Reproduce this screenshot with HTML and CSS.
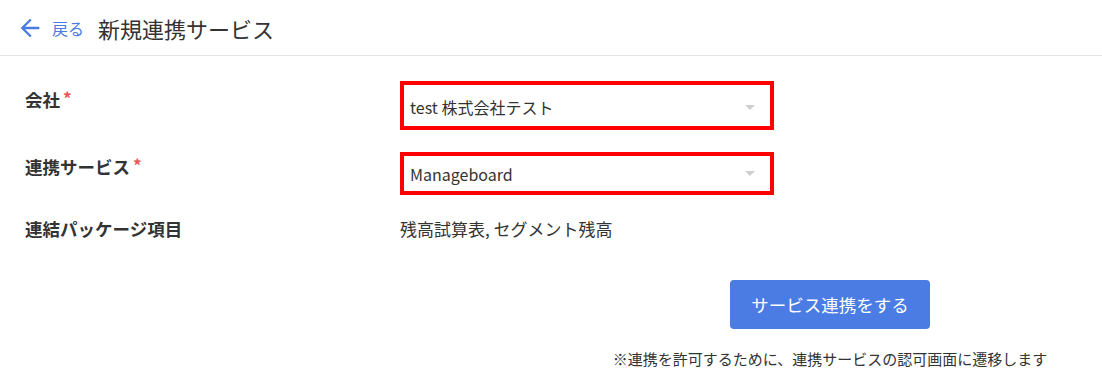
FILE: index.html
```html
<!DOCTYPE html>
<html lang="ja">
<head>
    <meta charset="UTF-8">
    <meta name="viewport" content="width=device-width, initial-scale=1.0">
    <title>新規連携サービス</title>
    <link rel="stylesheet" href="styles.css">
</head>
<body>
    <div class="page-header">
        <a class="back-link" href="#">
            <svg class="back-icon" viewBox="0 0 24 24" width="28" height="28">
                <path d="M20 11H7.83l5.59-5.59L12 4l-8 8 8 8 1.41-1.41L7.83 13H20v-2z" fill="currentColor"/>
            </svg>
            <span>戻る</span>
        </a>
        <h1 class="page-title">新規連携サービス</h1>
    </div>

    <div class="form">
        <div class="form-row row-company">
            <div class="form-label">会社<span class="required">*</span></div>
            <div class="select select-tall">
                <span class="select-value">test 株式会社テスト</span>
                <span class="select-caret"></span>
            </div>
        </div>
        <div class="form-row row-service">
            <div class="form-label">連携サービス<span class="required">*</span></div>
            <div class="select">
                <span class="select-value">Manageboard</span>
                <span class="select-caret"></span>
            </div>
        </div>
        <div class="form-row row-package">
            <div class="form-label">連結パッケージ項目</div>
            <div class="form-value">残高試算表, セグメント残高</div>
        </div>

        <div class="form-actions">
            <button class="primary-button" type="button">サービス連携をする</button>
            <p class="form-note">※連携を許可するために、連携サービスの認可画面に遷移します</p>
        </div>
    </div>
</body>
</html>
```

FILE: styles.css
```css
body {
    font-family: "Noto Sans CJK JP", "Noto Sans", sans-serif;
    margin: 0;
    padding: 0;
    background-color: #fff;
    color: #333;
}

.page-header {
    display: flex;
    align-items: center;
    height: 55px;
    padding-left: 16px;
    border-bottom: 1px solid #e3e3e3;
}

.back-link {
    display: flex;
    align-items: center;
    gap: 8px;
    color: #4a7be0;
    text-decoration: none;
    font-size: 16px;
}

.back-icon {
    display: block;
}

.page-title {
    margin: 0 0 0 14px;
    font-size: 22px;
    font-weight: normal;
    color: #333;
    line-height: 30px;
}

.form {
    padding: 25px 0 0 25px;
}

.form-row {
    display: flex;
    align-items: flex-start;
}

.form-label {
    width: 375px;
    font-size: 17.5px;
    font-weight: bold;
    line-height: 24px;
}

.required {
    color: #e85757;
    font-size: 17px;
    font-weight: bold;
    margin-left: 3px;
    vertical-align: top;
    position: relative;
    top: -2px;
}

.row-company .form-label {
    padding-top: 7px;
}

.row-service {
    margin-top: 22px;
}

.row-service .form-label {
    padding-top: 3px;
}

.row-package {
    margin-top: 22px;
}

.select {
    box-sizing: border-box;
    width: 374px;
    height: 43px;
    border: 4px solid #f00;
    display: flex;
    align-items: center;
    justify-content: space-between;
    padding: 0 15px 0 6px;
    font-size: 16px;
}

.select-tall {
    height: 49px;
    padding-top: 3px;
}

.select-value {
    color: #333;
}

.select-caret {
    width: 0;
    height: 0;
    border-left: 5px solid transparent;
    border-right: 5px solid transparent;
    border-top: 5px solid #cfcfcf;
}

.form-value {
    font-size: 17px;
    line-height: 24px;
}

.form-actions {
    width: 460px;
    margin: 39px 0 0 575px;
    display: flex;
    flex-direction: column;
    align-items: center;
}

.primary-button {
    width: 200px;
    height: 49px;
    border: none;
    border-radius: 4px;
    background-color: #4a7ce4;
    color: #fff;
    font-family: inherit;
    font-size: 17.5px;
    cursor: pointer;
}

.form-note {
    margin: 20px 0 0;
    font-size: 15px;
    line-height: 20px;
    white-space: nowrap;
}
```
